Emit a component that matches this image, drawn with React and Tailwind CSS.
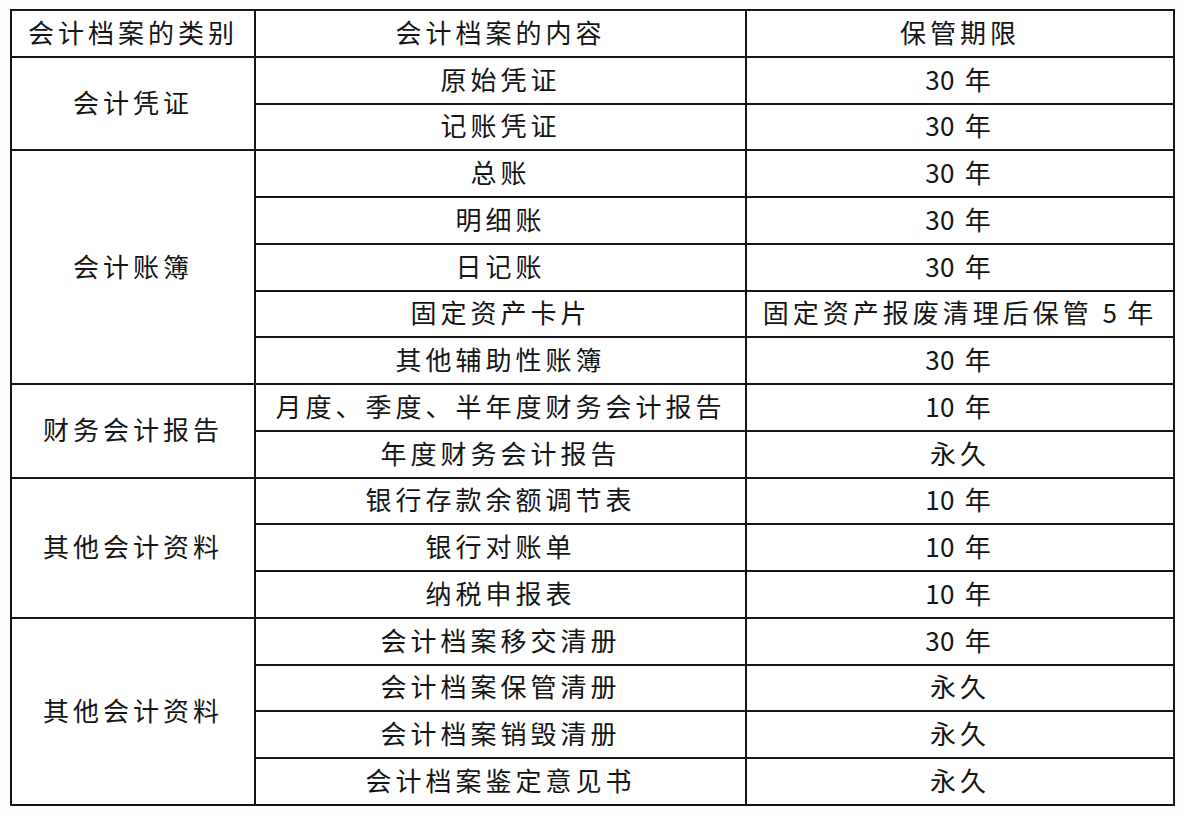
const groups = [
  { name: "会计凭证", rows: [["原始凭证", "30 年"], ["记账凭证", "30 年"]] },
  {
    name: "会计账簿",
    rows: [
      ["总账", "30 年"],
      ["明细账", "30 年"],
      ["日记账", "30 年"],
      ["固定资产卡片", "固定资产报废清理后保管 5 年"],
      ["其他辅助性账簿", "30 年"],
    ],
  },
  { name: "财务会计报告", rows: [["月度、季度、半年度财务会计报告", "10 年"], ["年度财务会计报告", "永久"]] },
  { name: "其他会计资料", rows: [["银行存款余额调节表", "10 年"], ["银行对账单", "10 年"], ["纳税申报表", "10 年"]] },
  {
    name: "其他会计资料",
    rows: [
      ["会计档案移交清册", "30 年"],
      ["会计档案保管清册", "永久"],
      ["会计档案销毁清册", "永久"],
      ["会计档案鉴定意见书", "永久"],
    ],
  },
];

const cell = "border-2 border-[#161616] text-center align-middle p-0 pb-[4px]";

// 数字不加字距
const Text = ({ value }) =>
  value.split(/(\d+)/).map((part, i) =>
    /^\d+$/.test(part) ? (
      <span key={i} className="tracking-[0.5px]">
        {part}
      </span>
    ) : (
      <span key={i}>{part}</span>
    )
  );

export default function App() {
  return (
    <div className="w-[1182px] h-[816px] bg-[#fdfdfd] pt-[9px] pl-[10px] font-['Noto_Sans_CJK_SC','Noto_Sans',sans-serif] text-[26px] tracking-[4px] text-[#151515]">
      <table className="table-fixed border-collapse border-2 border-[#161616] w-[1163px] h-[797px] bg-white">
        <colgroup>
          <col className="w-[244px]" />
          <col className="w-[491px]" />
          <col className="w-[428px]" />
        </colgroup>
        <tbody>
          <tr>
            <td className={cell}>会计档案的类别</td>
            <td className={cell}>会计档案的内容</td>
            <td className={cell}>保管期限</td>
          </tr>
          {groups.map((g, gi) =>
            g.rows.map((r, ri) => (
              <tr key={gi + "-" + ri}>
                {ri === 0 && (
                  <td className={cell} rowSpan={g.rows.length}>
                    {g.name}
                  </td>
                )}
                <td className={cell}>{r[0]}</td>
                <td className={cell}>
                  <Text value={r[1]} />
                </td>
              </tr>
            ))
          )}
        </tbody>
      </table>
    </div>
  );
}
